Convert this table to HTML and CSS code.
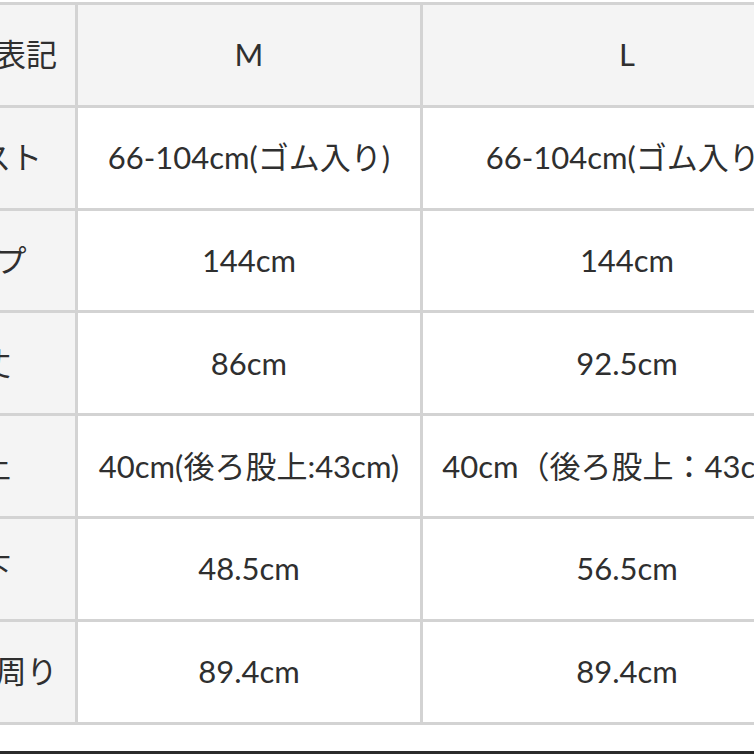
FILE: index.html
```html
<!DOCTYPE html>
<html lang="ja">
<head>
<meta charset="utf-8">
<title>サイズ表</title>
<link rel="stylesheet" href="styles.css">
</head>
<body>
<div class="viewport">
  <div class="size-table">
    <div class="cell head label">サイズ表記</div>
    <div class="cell head">M</div>
    <div class="cell head">L</div>

    <div class="cell label">ウエスト</div>
    <div class="cell">66-104cm(ゴム入り)</div>
    <div class="cell">66-104cm(ゴム入り)</div>

    <div class="cell label">ヒップ</div>
    <div class="cell">144cm</div>
    <div class="cell">144cm</div>

    <div class="cell label">総丈</div>
    <div class="cell">86cm</div>
    <div class="cell">92.5cm</div>

    <div class="cell label">股上</div>
    <div class="cell">40cm(後ろ股上:43cm)</div>
    <div class="cell">40cm（後ろ股上：43cm）</div>

    <div class="cell label">股下</div>
    <div class="cell">48.5cm</div>
    <div class="cell">56.5cm</div>

    <div class="cell label">太もも周り</div>
    <div class="cell">89.4cm</div>
    <div class="cell">89.4cm</div>
  </div>
</div>
<div class="bottom-bar"></div>
</body>
</html>
```

FILE: styles.css
```css
html, body {
  margin: 0;
  padding: 0;
  background: #ffffff;
}

body {
  width: 754px;
  height: 754px;
  overflow: hidden;
  display: flex;
  flex-direction: column;
  font-family: Lato, "Noto Sans CJK JP", sans-serif;
  color: #2f2f2f;
}

.viewport {
  width: 754px;
  overflow: hidden;
  padding-top: 2px;
}

.size-table {
  margin-left: -118px;
  width: max-content;
  display: grid;
  grid-template-columns: 190px 342px 408px;
  grid-auto-rows: 99.8px;
  gap: 3px;
  padding: 3px;
  background: #d3d3d3;
}

.cell {
  background: #ffffff;
  display: flex;
  align-items: center;
  justify-content: center;
  font-size: 31px;
  line-height: 1;
  white-space: nowrap;
}

.cell.head,
.cell.label {
  background: #f4f4f4;
}

.bottom-bar {
  margin-top: auto;
  height: 3px;
  background: #2b2b2b;
}
```
